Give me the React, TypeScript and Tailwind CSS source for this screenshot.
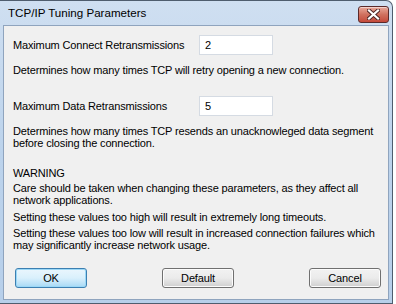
import React from 'react';

const font = { fontFamily: '"Liberation Sans", Arial, sans-serif' };

function CloseButton() {
  return (
    <div className="absolute right-[3px] top-[5px] w-[31px] h-[17px] rounded-[3px] border border-[#5b2a2a] bg-gradient-to-b from-[#e9a99b] via-[#d0715f] to-[#c4493a] flex items-center justify-center shadow-[inset_0_1px_0_rgba(255,255,255,0.5)]">
      <svg width="13" height="11" viewBox="0 0 13 11">
        <path d="M2 1.5 L11 9.5 M11 1.5 L2 9.5" stroke="#4a2323" strokeWidth="4" strokeLinecap="square" />
        <path d="M2 1.5 L11 9.5 M11 1.5 L2 9.5" stroke="#ffffff" strokeWidth="2.2" strokeLinecap="square" />
      </svg>
    </div>
  );
}

function Btn({ label, primary }: { label: string; primary?: boolean }) {
  return (
    <button
      className={
        primary
          ? 'w-[72px] h-[20px] rounded-[3px] border border-[#3c7fb1] bg-gradient-to-b from-[#eaf6fd] via-[#d9f0fc] to-[#a7d9f5] text-[11px] text-black shadow-[inset_0_0_0_1px_#9bd8f7]'
          : 'w-[72px] h-[20px] rounded-[3px] border border-[#707070] bg-gradient-to-b from-[#f2f2f2] via-[#ebebeb] to-[#cfcfcf] text-[11px] text-black shadow-[inset_0_0_0_1px_#fcfcfc]'
      }
      style={font}
    >
      {label}
    </button>
  );
}

export default function App() {
  return (
    <div className="w-[396px] h-[304px] bg-white overflow-hidden">
      <div className="relative w-[393px] h-[304px] rounded-tr-[7px] border-t border-r border-b border-[#4f5d6e] bg-gradient-to-b from-[#cfdff1] via-[#bcd3ec] to-[#b7cfea] flex flex-col">
        <div className="h-[24px] pl-[8px] flex items-center text-[11.6px] text-black" style={font}>
          TCP/IP Tuning Parameters
        </div>
        <CloseButton />
        <div className="ml-[3px] mr-[3px] flex-1 mb-[3px] bg-[#f0f0f0] border border-[#8fa4be] flex flex-col text-[11px] tracking-[-0.15px] text-black leading-[12px] whitespace-nowrap" style={font}>
          <div className="pl-[9px] pt-[9px] flex items-center">
            <span className="w-[186px]">Maximum Connect Retransmissions</span>
            <div className="w-[74px] h-[20px] bg-white border border-[#d5dbe3] flex items-center pl-[5px]">2</div>
          </div>
          <div className="pl-[9px] mt-[9px]">Determines how many times TCP will retry opening a new connection.</div>
          <div className="pl-[9px] mt-[20px] flex items-center">
            <span className="w-[186px]">Maximum Data Retransmissions</span>
            <div className="w-[74px] h-[20px] bg-white border border-[#d5dbe3] flex items-center pl-[5px]">5</div>
          </div>
          <div className="pl-[9px] mt-[9px]">
            Determines how many times TCP resends an unacknowleged data segment
            <br />
            before closing the connection.
          </div>
          <div className="pl-[9px] mt-[18px]">WARNING</div>
          <div className="pl-[9px] mt-[3px]">
            Care should be taken when changing these parameters, as they affect all
            <br />
            network applications.
          </div>
          <div className="pl-[9px] mt-[5px]">Setting these values too high will result in extremely long timeouts.</div>
          <div className="pl-[9px] mt-[4px]">
            Setting these values too low will result in increased connection failures which
            <br />
            may significantly increase network usage.
          </div>
          <div className="mt-auto mb-[11px] pl-[11px] pr-[7px] flex justify-between">
            <Btn label="OK" primary />
            <Btn label="Default" />
            <Btn label="Cancel" />
          </div>
        </div>
      </div>
    </div>
  );
}
